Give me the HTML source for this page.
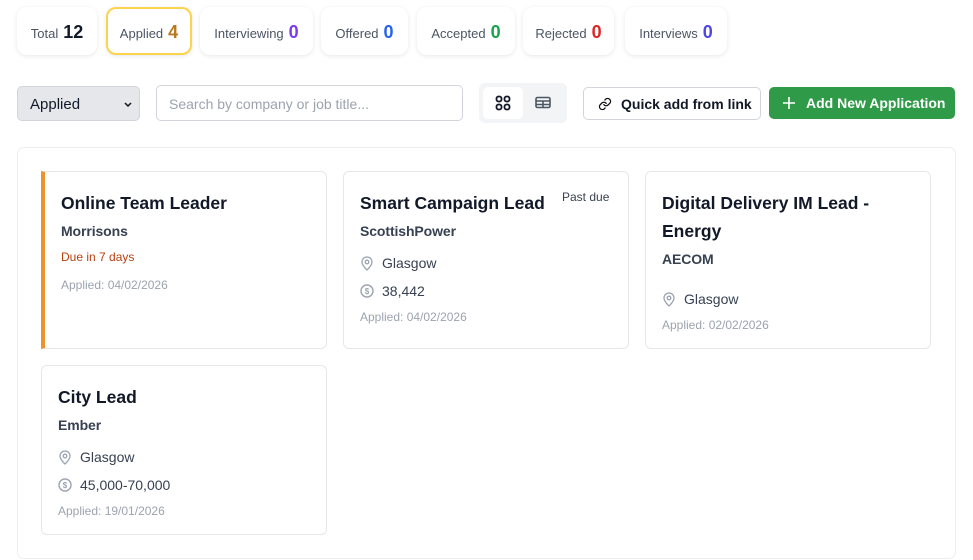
<!DOCTYPE html>
<html><head><meta charset="utf-8"><style>
*{box-sizing:border-box;margin:0;padding:0}
body{width:973px;height:560px;background:#fff;font-family:"Liberation Sans",Arial,sans-serif;position:relative;overflow:hidden;color:#111827}
.a{position:absolute}
.stat{position:absolute;top:7px;height:48px;background:#fff;border-radius:10px;box-shadow:0 1px 4px rgba(0,0,0,.10);display:flex;align-items:baseline;justify-content:center;font-size:13px;color:#4b5563;gap:5px;padding-top:15px}
.stat b{font-size:18px;font-weight:700}
.card{position:absolute;background:#fff;border:1px solid #e5e7eb;border-radius:6px}
.t{position:absolute;font-size:17.5px;font-weight:700;color:#111827;line-height:28px}
.co{position:absolute;font-size:14px;font-weight:600;color:#374151;letter-spacing:-0.1px}
.ln{position:absolute;font-size:14px;color:#374151;display:flex;align-items:center;gap:8px}
.ap{position:absolute;font-size:12px;color:#9ca3af}
</style></head><body>
<div class="stat" style="left:17px;width:80px">Total <b style="color:#111827">12</b></div>
<div class="stat" style="left:106px;width:86px;border:2px solid #fcd34d;padding-top:13px">Applied <b style="color:#b7791f">4</b></div>
<div class="stat" style="left:200px;width:113px">Interviewing <b style="color:#7c3aed">0</b></div>
<div class="stat" style="left:321px;width:87px">Offered <b style="color:#2563eb">0</b></div>
<div class="stat" style="left:417px;width:98px">Accepted <b style="color:#16a34a">0</b></div>
<div class="stat" style="left:523px;width:91px">Rejected <b style="color:#dc2626">0</b></div>
<div class="stat" style="left:625px;width:102px">Interviews <b style="color:#4f46e5">0</b></div>

<div class="a" style="left:17px;top:86px;width:123px;height:35px;background:#e5e7eb;border:1px solid #d1d5db;border-radius:5px;font-size:15px;padding:9px 12px;color:#111827">Applied<svg class="a" style="right:6px;top:14px" width="10" height="7" viewBox="0 0 10 7"><path d="M2 2l3 3 3-3" stroke="#111" stroke-width="1.5" fill="none"/></svg></div>
<div class="a" style="left:156px;top:85px;width:307px;height:36px;border:1px solid #d1d5db;border-radius:5px;font-size:14px;color:#9ca3af;padding:10px 12px">Search by company or job title...</div>
<div class="a" style="left:479px;top:83px;width:88px;height:40px;background:#f3f4f6;border-radius:6px"></div>
<div class="a" style="left:483px;top:87px;width:40px;height:32px;background:#fff;border-radius:5px"></div>
<svg class="a" style="left:495px;top:95px" width="16" height="16" viewBox="0 0 16 16" fill="none" stroke="#111827" stroke-width="1.8"><rect x="1.5" y="1.5" width="5" height="5" rx="2"/><rect x="9.5" y="1.5" width="5" height="5" rx="2"/><rect x="1.5" y="9.5" width="5" height="5" rx="2"/><rect x="9.5" y="9.5" width="5" height="5" rx="2"/></svg>
<svg class="a" style="left:535px;top:96px" width="16" height="14" viewBox="0 0 16 14" fill="none" stroke="#4b5563" stroke-width="1.6"><rect x="1" y="1.5" width="14" height="10" rx="1.5"/><path d="M1 5h14M1 8.5h14M8 5v6.5"/></svg>
<div class="a" style="left:583px;top:87px;width:178px;height:33px;border:1px solid #d1d5db;border-radius:5px;font-size:14px;font-weight:600;color:#111827;display:flex;align-items:center;padding-left:14px;gap:9px"><svg width="14" height="14" viewBox="0 0 24 24" fill="none" stroke="#111" stroke-width="2.2" stroke-linecap="round"><path d="M10 13a5 5 0 0 0 7.5.5l3-3a5 5 0 0 0-7-7l-1.7 1.7"/><path d="M14 11a5 5 0 0 0-7.5-.5l-3 3a5 5 0 0 0 7 7l1.7-1.7"/></svg>Quick add from link</div>
<div class="a" style="left:769px;top:87px;width:186px;height:32px;background:#2f9a47;border-radius:5px;font-size:14px;font-weight:600;color:#fff;display:flex;align-items:center;padding-left:13px;gap:10px"><svg width="14" height="14" viewBox="0 0 14 14" stroke="#fff" stroke-width="1.6"><path d="M7 1v12M1 7h12"/></svg>Add New Application</div>

<div class="a" style="left:17px;top:147px;width:939px;height:412px;border:1px solid #eceef1;border-radius:7px"></div>

<div class="card" style="left:41px;top:171px;width:286px;height:178px;border-left:4px solid #f0922b;border-radius:0 6px 6px 0">
<div class="t" style="left:16px;top:17px">Online Team Leader</div>
<div class="co" style="left:16px;top:51px">Morrisons</div>
<div class="a" style="left:16px;top:78px;font-size:12px;color:#b6410f">Due in 7 days</div>
<div class="ap" style="left:16px;top:106px">Applied: 04/02/2026</div>
</div>

<svg width="0" height="0" style="position:absolute"><defs>
<g id="pin"><path d="M7 14s-5-4.5-5-8a5 5 0 0 1 10 0c0 3.5-5 8-5 8z" fill="none" stroke="#9ca3af" stroke-width="1.3"/><circle cx="7" cy="6" r="1.8" fill="none" stroke="#9ca3af" stroke-width="1.3"/></g>
<g id="money"><circle cx="7" cy="7" r="6" fill="none" stroke="#9ca3af" stroke-width="1.4"/><text x="7" y="10" font-size="8" font-weight="bold" text-anchor="middle" fill="#9ca3af" font-family="Liberation Sans">$</text></g>
</defs></svg>

<div class="card" style="left:343px;top:171px;width:286px;height:178px">
<div class="t" style="left:16px;top:17px">Smart Campaign Lead</div>
<div class="a" style="left:218px;top:18px;font-size:12px;color:#374151">Past due</div>
<div class="co" style="left:16px;top:51px">ScottishPower</div>
<div class="ln" style="left:16px;top:83px"><svg width="14" height="15"><use href="#pin"/></svg>Glasgow</div>
<div class="ln" style="left:16px;top:111px"><svg width="14" height="14"><use href="#money"/></svg>38,442</div>
<div class="ap" style="left:16px;top:138px">Applied: 04/02/2026</div>
</div>

<div class="card" style="left:645px;top:171px;width:286px;height:178px">
<div class="t" style="left:16px;top:17px">Digital Delivery IM Lead -<br>Energy</div>
<div class="co" style="left:16px;top:79px">AECOM</div>
<div class="ln" style="left:16px;top:119px"><svg width="14" height="15"><use href="#pin"/></svg>Glasgow</div>
<div class="ap" style="left:16px;top:146px">Applied: 02/02/2026</div>
</div>

<div class="card" style="left:41px;top:365px;width:286px;height:170px">
<div class="t" style="left:16px;top:17px">City Lead</div>
<div class="co" style="left:16px;top:51px">Ember</div>
<div class="ln" style="left:16px;top:83px"><svg width="14" height="15"><use href="#pin"/></svg>Glasgow</div>
<div class="ln" style="left:16px;top:111px"><svg width="14" height="14"><use href="#money"/></svg>45,000-70,000</div>
<div class="ap" style="left:16px;top:138px">Applied: 19/01/2026</div>
</div>
</body></html>
